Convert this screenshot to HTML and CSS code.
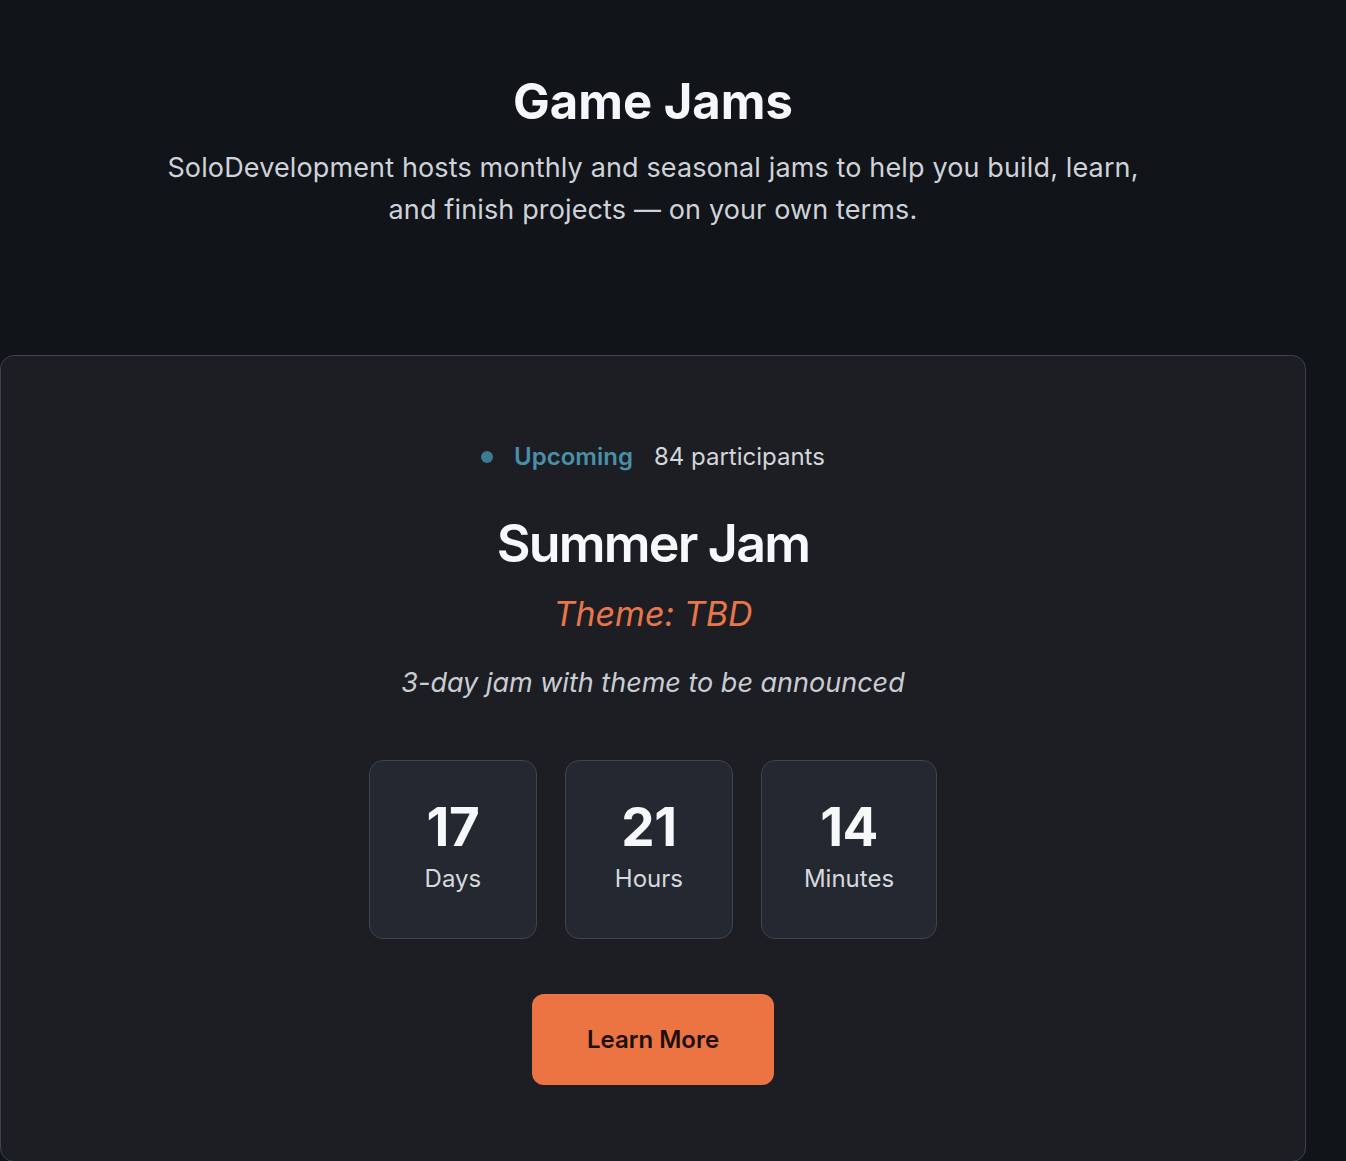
FILE: index.html
```html
<!DOCTYPE html>
<html lang="en">
<head>
    <meta charset="UTF-8">
    <meta name="viewport" content="width=device-width, initial-scale=1.0">
    <title>Game Jams</title>
    <link rel="stylesheet" href="styles.css">
</head>
<body>

    <div class="page">
        <!-- Header -->
        <header class="intro">
            <h1>Game Jams</h1>
            <p class="lead">SoloDevelopment hosts monthly and seasonal jams to help you build, learn, and finish projects — on your own terms.</p>
        </header>

        <!-- Featured jam -->
        <section class="jam-card">
            <div class="status-row">
                <span class="dot"></span>
                <span class="status">Upcoming</span>
                <span class="participants">84 participants</span>
            </div>

            <h2 class="jam-title">Summer Jam</h2>
            <p class="jam-theme">Theme: TBD</p>
            <p class="jam-desc">3-day jam with theme to be announced</p>

            <div class="countdown">
                <div class="count-box">
                    <span class="count-num">17</span>
                    <span class="count-label">Days</span>
                </div>
                <div class="count-box">
                    <span class="count-num">21</span>
                    <span class="count-label">Hours</span>
                </div>
                <div class="count-box">
                    <span class="count-num">14</span>
                    <span class="count-label">Minutes</span>
                </div>
            </div>

            <button class="learn-btn">Learn More</button>
        </section>
    </div>

</body>
</html>
```

FILE: styles.css
```css
body {
    margin: 0;
    font-family: Inter, "Noto Sans", sans-serif;
    background-color: #111419;
    color: #f5f6f8;
}
.page {
    width: 1306px;
}
.intro {
    padding-top: 73px;
    text-align: center;
}
.intro h1 {
    margin: 0;
    font-size: 49px;
    line-height: 58px;
    font-weight: 700;
    color: #f6f7f9;
}
.lead {
    max-width: 1000px;
    margin: 16px auto 0;
    font-size: 27px;
    line-height: 42px;
    letter-spacing: 0.005em;
    color: #cfd3d9;
}
.jam-card {
    margin-top: 124px;
    padding: 86px 20px 76px;
    background-color: #1c1e23;
    border: 1px solid #3b4250;
    border-radius: 14px;
    text-align: center;
}
.status-row {
    display: flex;
    justify-content: center;
    align-items: center;
    font-size: 24px;
    line-height: 29px;
}
.dot {
    width: 12px;
    height: 12px;
    border-radius: 50%;
    background-color: #3d7a93;
    margin-right: 21px;
}
.status {
    color: #4a8fa8;
    font-weight: 600;
    margin-right: 21px;
}
.participants {
    color: #d3d6db;
}
.jam-title {
    margin: 42px 0 0;
    font-size: 52px;
    line-height: 62px;
    font-weight: 600;
    letter-spacing: -0.035em;
    color: #f7f8fa;
}
.jam-theme {
    margin: 18px 0 0;
    font-size: 34px;
    line-height: 42px;
    font-style: italic;
    color: #e9764a;
}
.jam-desc {
    margin: 30px 0 0;
    font-size: 27px;
    line-height: 36px;
    font-style: italic;
    color: #c9cdd3;
}
.countdown {
    display: flex;
    justify-content: center;
    gap: 28px;
    margin-top: 59px;
}
.count-box {
    display: flex;
    flex-direction: column;
    align-items: center;
    min-width: 168px;
    box-sizing: border-box;
    padding: 34px 42px 45px;
    background-color: #242830;
    border: 1px solid #3d4452;
    border-radius: 14px;
}
.count-num {
    font-size: 53px;
    line-height: 64px;
    font-weight: 700;
    letter-spacing: -0.01em;
    color: #f7f8fa;
}
.count-label {
    margin-top: 5px;
    font-size: 24px;
    line-height: 29px;
    color: #d6d9de;
}
.learn-btn {
    margin-top: 55px;
    padding: 31px 55px;
    font-family: inherit;
    font-size: 24px;
    line-height: 29px;
    font-weight: 600;
    color: #1c0f09;
    background-color: #ec7443;
    border: none;
    border-radius: 12px;
    cursor: pointer;
}
```
